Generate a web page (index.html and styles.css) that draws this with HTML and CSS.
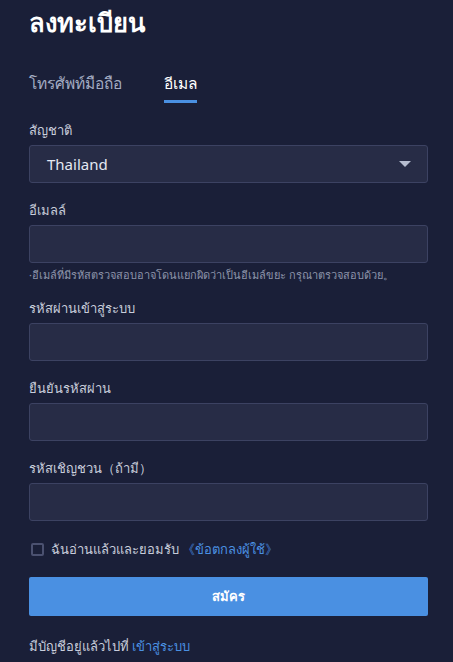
FILE: index.html
```html
<!DOCTYPE html>
<html lang="th">
<head>
  <meta charset="UTF-8" />
  <meta name="viewport" content="width=device-width, initial-scale=1.0" />
  <title>ลงทะเบียน</title>
  <link rel="stylesheet" href="styles.css">
</head>
<body>
  <div class="register">
    <h1 class="title">ลงทะเบียน</h1>

    <!-- Tabs -->
    <div class="tabs">
      <span class="tab">โทรศัพท์มือถือ</span>
      <span class="tab active">อีเมล</span>
    </div>

    <div class="field">
      <label>สัญชาติ</label>
      <div class="select-box">
        <span>Thailand</span>
        <span class="arrow"></span>
      </div>
    </div>

    <div class="field">
      <label>อีเมลล์</label>
      <div class="input-box"></div>
      <p class="hint">·อีเมล์ที่มีรหัสตรวจสอบอาจโดนแยกผิดว่าเป็นอีเมล์ขยะ กรุณาตรวจสอบด้วย。</p>
    </div>

    <div class="field">
      <label>รหัสผ่านเข้าสู่ระบบ</label>
      <div class="input-box"></div>
    </div>

    <div class="field">
      <label>ยืนยันรหัสผ่าน</label>
      <div class="input-box"></div>
    </div>

    <div class="field">
      <label>รหัสเชิญชวน（ถ้ามี）</label>
      <div class="input-box"></div>
    </div>

    <div class="agree">
      <span class="checkbox"></span>
      <span>ฉันอ่านแล้วและยอมรับ <a href="#">《ข้อตกลงผู้ใช้》</a></span>
    </div>

    <button class="submit-btn">สมัคร</button>

    <p class="login-link">มีบัญชีอยู่แล้วไปที่ <a href="#">เข้าสู่ระบบ</a></p>
  </div>
</body>
</html>
```

FILE: styles.css
```css
* {
  margin: 0;
  padding: 0;
  box-sizing: border-box;
  font-family: Tahoma, 'Noto Sans', 'DejaVu Sans', sans-serif;
}

body, html {
  height: 100%;
  overflow: hidden;
}

body {
  background: #1a1f38;
  color: #c4c9d8;
}

.register {
  padding: 6px 25px 0 29px;
}

.title {
  font-size: 25.5px;
  font-weight: bold;
  color: #ffffff;
  line-height: 32px;
  height: 32px;
}

.tabs {
  display: flex;
  gap: 42px;
  margin-top: 34px;
  height: 31px;
}

.tab {
  font-size: 15.5px;
  line-height: 22px;
  height: 31px;
  color: #a3abc2;
  padding-bottom: 6px;
  border-bottom: 3px solid transparent;
}

.tab.active {
  color: #ffffff;
  border-bottom-color: #4a90e2;
}

.field {
  margin-top: 18px;
}

.field label {
  display: block;
  font-size: 13px;
  line-height: 18px;
  height: 18px;
  color: #c8cddb;
  margin-bottom: 6px;
}

.select-box,
.input-box {
  height: 38px;
  background: #272c46;
  border: 1px solid #3c4262;
  border-radius: 3px;
}

.select-box {
  display: flex;
  align-items: center;
  justify-content: space-between;
  padding: 0 16px 0 17px;
  font-size: 15px;
  color: #e4e8f2;
}

.arrow {
  width: 0;
  height: 0;
  border-left: 6px solid transparent;
  border-right: 6px solid transparent;
  border-top: 6px solid #b6bdd0;
}

.hint {
  font-size: 11px;
  line-height: 12px;
  height: 18px;
  padding-top: 6px;
  color: #8d94aa;
  white-space: nowrap;
}

.agree {
  display: flex;
  align-items: center;
  gap: 7px;
  height: 18px;
  margin-top: 19px;
  font-size: 13px;
  color: #c8cddb;
  padding-left: 2px;
}

.checkbox {
  width: 13px;
  height: 13px;
  border: 2px solid #4b5170;
  border-radius: 2px;
}

a {
  color: #4a90e2;
  text-decoration: none;
}

.submit-btn {
  display: block;
  width: 100%;
  height: 39px;
  margin-top: 19px;
  background: #4a90e2;
  border: none;
  border-radius: 2px;
  color: #ffffff;
  font-size: 13px;
  font-weight: bold;
  cursor: pointer;
}

.login-link {
  margin-top: 21px;
  font-size: 13px;
  line-height: 18px;
  height: 18px;
  color: #c8cddb;
}
```
